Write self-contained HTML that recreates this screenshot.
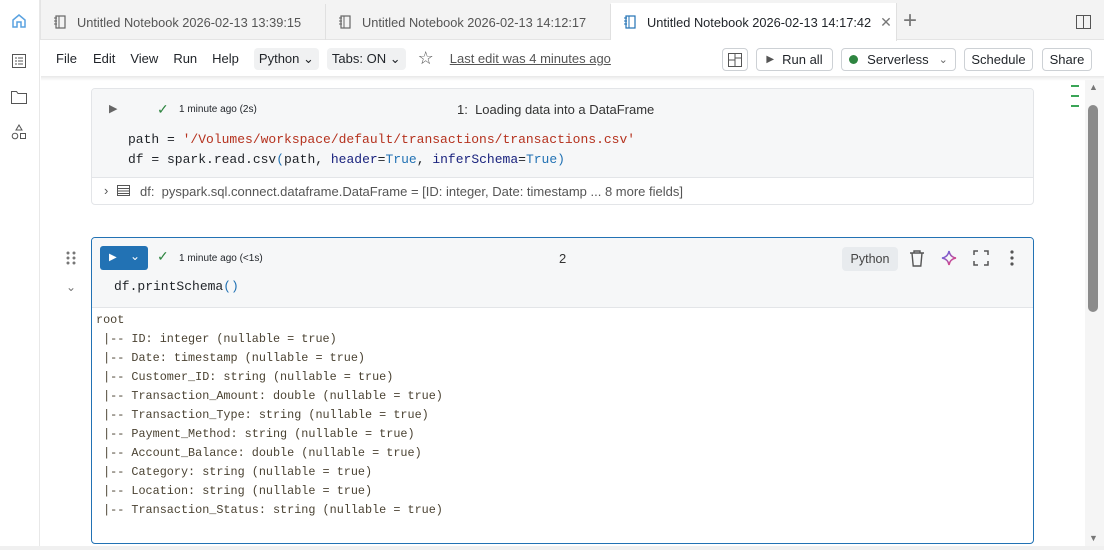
<!DOCTYPE html>
<html><head><meta charset="utf-8"><style>
*{box-sizing:border-box;margin:0;padding:0}
body{width:1104px;height:550px;overflow:hidden;background:#fff;font-family:"Liberation Sans",sans-serif;font-size:13px;color:#1f2328;position:relative}
.abs{position:absolute}
.tabbar{left:0;top:0;width:1104px;height:40px;background:#f3f3f3;border-bottom:1px solid #e4e4e4}
.tab{top:4px;height:36px;display:flex;align-items:center;font-size:12.8px;color:#555;border-right:1px solid #e0e0e0;padding-left:12px;white-space:nowrap}
.side{left:0;top:0;width:40px;height:550px;background:#fff;border-right:1px solid #e8e8e8}
.menu{top:40px;left:41px;right:0;height:37px;display:flex;align-items:center;font-size:13px}
.btn{position:absolute;top:48px;height:23px;border:1px solid #cdd1d5;border-radius:4px;display:flex;align-items:center;justify-content:center;font-size:13px;color:#1f2328;background:#fff}
.pill{background:#f0f1f2;border-radius:4px;padding:3px 5px;margin-right:8px}
.mono{font-family:"Liberation Mono",monospace}
.out div{height:19px;line-height:19px}
</style></head><body>
<div class="abs tabbar"></div>
<div class="abs side"></div>
<svg class="abs" style="left:11px;top:13px" width="16" height="16" viewBox="0 0 16 16"><path d="M2 7L8 2l6 5v7h-4v-5H6v5H2z" fill="none" stroke="#5aa2e0" stroke-width="1.5"/></svg>
<div class="abs" style="left:40px;top:0;height:40px;border-left:1px solid #e4e4e4"></div>
<div class="abs tab" style="left:41px;width:285px"><svg width="14" height="14" viewBox="0 0 14 14"><rect x="3" y="1" width="9" height="12" fill="none" stroke="#666" stroke-width="1.2"/><path d="M6 1v12M1 3h3M1 6h3M1 9h3" stroke="#666"/></svg><span style="margin-left:10px">Untitled Notebook 2026-02-13 13:39:15</span></div>
<div class="abs tab" style="left:326px;width:285px"><svg width="14" height="14" viewBox="0 0 14 14"><rect x="3" y="1" width="9" height="12" fill="none" stroke="#666" stroke-width="1.2"/><path d="M6 1v12M1 3h3M1 6h3M1 9h3" stroke="#666"/></svg><span style="margin-left:10px">Untitled Notebook 2026-02-13 14:12:17</span></div>
<div class="abs tab" style="left:611px;width:286px;background:#fff;top:3px;height:38px;color:#1f2328"><svg width="14" height="14" viewBox="0 0 14 14"><rect x="3" y="1" width="9" height="12" fill="none" stroke="#2272b4" stroke-width="1.2"/><path d="M6 1v12M1 3h3M1 6h3M1 9h3" stroke="#2272b4"/></svg><span style="margin-left:10px">Untitled Notebook 2026-02-13 14:17:42</span><span style="margin-left:9px;color:#777;font-size:14px">✕</span></div>
<div class="abs" style="left:903px;top:9px;font-size:24px;color:#777;line-height:24px">+</div>
<svg class="abs" style="left:1076px;top:15px" width="15" height="14"><rect x="0.5" y="0.5" width="14" height="13" fill="none" stroke="#555"/><path d="M7.5 0v14" stroke="#555"/></svg>
<svg class="abs" style="left:12px;top:54px" width="14" height="14"><rect x="0.5" y="0.5" width="13" height="13" fill="none" stroke="#555"/><path d="M3 4h2M3 7h2M3 10h2M6 4h5M6 7h5M6 10h5" stroke="#555"/></svg>
<svg class="abs" style="left:11px;top:90px" width="16" height="14"><path d="M0.5 1.5h5l1.5 2h8.5v10H0.5z" fill="none" stroke="#555"/></svg>
<svg class="abs" style="left:11px;top:124px" width="16" height="16"><path d="M8 1l3 5H5z" fill="none" stroke="#555"/><circle cx="4" cy="12" r="2.8" fill="none" stroke="#555"/><rect x="9.5" y="9.5" width="5" height="5" fill="none" stroke="#555"/></svg>
<div class="abs menu"><span style="margin-left:15px">File</span><span style="margin-left:16px">Edit</span><span style="margin-left:15px">View</span><span style="margin-left:15px">Run</span><span style="margin-left:15px">Help</span><span style="margin-left:15px" class="pill">Python ⌄</span><span class="pill">Tabs: ON ⌄</span><span style="font-size:18px;color:#555;margin-left:4px">☆</span><span style="margin-left:16px;text-decoration:underline;color:#555">Last edit was 4 minutes ago</span></div>
<div class="btn" style="left:722px;width:26px"><svg width="14" height="14"><rect x="0.5" y="0.5" width="13" height="13" fill="none" stroke="#555"/><path d="M7 0v14M0 7h7M7 5h7" stroke="#555"/></svg></div>
<div class="btn" style="left:756px;width:77px"><span style="font-size:10px;color:#555;margin-right:8px">▶</span>Run all</div>
<div class="btn" style="left:841px;width:115px"><span style="width:9px;height:9px;border-radius:50%;background:#2e8540;display:inline-block;margin-right:9px"></span>Serverless<span style="margin-left:10px;color:#666;font-size:11px">⌄</span></div>
<div class="btn" style="left:964px;width:69px">Schedule</div>
<div class="btn" style="left:1042px;width:50px">Share</div>
<div class="abs" style="left:41px;top:76px;width:1063px;height:5px;background:linear-gradient(#e8e8e8,#fff)"></div>
<!-- cell 1 -->
<div class="abs" style="left:91px;top:88px;width:943px;height:117px;border:1px solid #e3e5e8;border-radius:4px;background:#fff;overflow:hidden">
<div style="height:89px;background:#f6f7f8;border-bottom:1px solid #e3e5e8;position:relative">
<span class="abs" style="left:17px;top:13px;font-size:11px;color:#666">▶</span>
<span class="abs" style="left:65px;top:12px;color:#2e8540;font-size:14px">✓</span>
<span class="abs" style="left:87px;top:15px;font-size:10px">1 minute ago (2s)</span>
<span class="abs" style="left:365px;top:13px;font-size:13px;color:#333">1:&nbsp; Loading data into a DataFrame</span>
<div class="abs mono" style="left:36px;top:41px;font-size:13px;line-height:20px;color:#1f2328">path = <span style="color:#b5321e">'/Volumes/workspace/default/transactions/transactions.csv'</span><br>df = spark.read.csv<span style="color:#2272b4">(</span>path, <span style="color:#1a237e">header</span>=<span style="color:#2272b4">True</span>, <span style="color:#1a237e">inferSchema</span>=<span style="color:#2272b4">True</span><span style="color:#2272b4">)</span></div>
</div>
<div style="position:relative;height:27px;font-size:13px;color:#555"><span class="abs" style="left:12px;top:5px">›</span><svg class="abs" style="left:25px;top:7px" width="13" height="11"><rect x="0.5" y="0.5" width="12" height="10" fill="none" stroke="#555"/><path d="M0 3.5h13M0 6h13M0 8.5h13" stroke="#555"/></svg><span class="abs" style="left:48px;top:6px">df:&nbsp; pyspark.sql.connect.dataframe.DataFrame = [ID: integer, Date: timestamp ... 8 more fields]</span></div>
</div>
<!-- cell 2 -->
<svg class="abs" style="left:66px;top:251px" width="10" height="14"><g fill="#777"><circle cx="2" cy="2" r="1.5"/><circle cx="8" cy="2" r="1.5"/><circle cx="2" cy="7" r="1.5"/><circle cx="8" cy="7" r="1.5"/><circle cx="2" cy="12" r="1.5"/><circle cx="8" cy="12" r="1.5"/></g></svg>
<span class="abs" style="left:66px;top:280px;color:#777;font-size:12px">⌄</span>
<div class="abs" style="left:91px;top:237px;width:943px;height:307px;border:1px solid #2272b4;border-radius:4px;background:#fff;overflow:hidden">
<div style="height:70px;background:#f6f7f8;border-bottom:1px solid #e3e5e8;position:relative">
<div class="abs" style="left:8px;top:8px;width:48px;height:24px;background:#2272b4;border-radius:3px;color:#fff;font-size:10px"><span class="abs" style="left:9px;top:6px">▶</span><span class="abs" style="left:30px;top:3px;font-size:12px">⌄</span></div>
<span class="abs" style="left:65px;top:10px;color:#2e8540;font-size:14px">✓</span>
<span class="abs" style="left:87px;top:15px;font-size:10px">1 minute ago (&lt;1s)</span>
<span class="abs" style="left:467px;top:13px;font-size:13px;color:#333">2</span>
<span class="abs" style="left:750px;top:9px;width:56px;height:24px;background:#e8ebee;border-radius:4px;text-align:center;line-height:24px;font-size:12.5px;color:#444">Python</span>
<svg class="abs" style="left:817px;top:12px" width="16" height="17"><path d="M1 3h14M5 3V1h6v2M3 3l1.2 13h7.6L13 3" fill="none" stroke="#555" stroke-width="1.4"/></svg>
<svg class="abs" style="left:849px;top:12px" width="16" height="16"><defs><linearGradient id="g" x1="0" y1="0" x2="1" y2="1"><stop offset="0" stop-color="#4a6cf7"/><stop offset="1" stop-color="#ff3b6b"/></linearGradient></defs><path d="M8 1Q9 7 15 8Q9 9 8 15Q7 9 1 8Q7 7 8 1z" fill="none" stroke="url(#g)" stroke-width="1.5"/></svg>
<svg class="abs" style="left:881px;top:12px" width="16" height="16"><path d="M1 5V1h4M11 1h4v4M15 11v4h-4M5 15H1v-4" fill="none" stroke="#555" stroke-width="1.5"/></svg>
<svg class="abs" style="left:918px;top:12px" width="4" height="16"><g fill="#555"><circle cx="2" cy="2" r="1.6"/><circle cx="2" cy="8" r="1.6"/><circle cx="2" cy="14" r="1.6"/></g></svg>
<div class="abs mono" style="left:22px;top:41px;font-size:13px">df.printSchema<span style="color:#2272b4">()</span></div>
</div>
<div class="out mono" style="padding:3px 0 0 4px;font-size:11.8px;color:#4a4232;white-space:pre"><div>root</div><div> |-- ID: integer (nullable = true)</div><div> |-- Date: timestamp (nullable = true)</div><div> |-- Customer_ID: string (nullable = true)</div><div> |-- Transaction_Amount: double (nullable = true)</div><div> |-- Transaction_Type: string (nullable = true)</div><div> |-- Payment_Method: string (nullable = true)</div><div> |-- Account_Balance: double (nullable = true)</div><div> |-- Category: string (nullable = true)</div><div> |-- Location: string (nullable = true)</div><div> |-- Transaction_Status: string (nullable = true)</div></div>
</div>
<!-- scroll + markers -->
<div class="abs" style="left:1071px;top:85px;width:8px;height:2px;background:#3aa556"></div>
<div class="abs" style="left:1071px;top:95px;width:8px;height:2px;background:#3aa556"></div>
<div class="abs" style="left:1071px;top:105px;width:8px;height:2px;background:#3aa556"></div>
<div class="abs" style="left:1085px;top:80px;width:19px;height:470px;background:#f5f5f5"></div>
<div class="abs" style="left:1089px;top:82px;font-size:9px;color:#777">▲</div>
<div class="abs" style="left:1088px;top:105px;width:10px;height:207px;background:#8b8b8b;border-radius:5px"></div>
<div class="abs" style="left:1089px;top:533px;font-size:9px;color:#777">▼</div>
<div class="abs" style="left:0;top:546px;width:1104px;height:4px;background:#f0f0f0"></div>
</body></html>
